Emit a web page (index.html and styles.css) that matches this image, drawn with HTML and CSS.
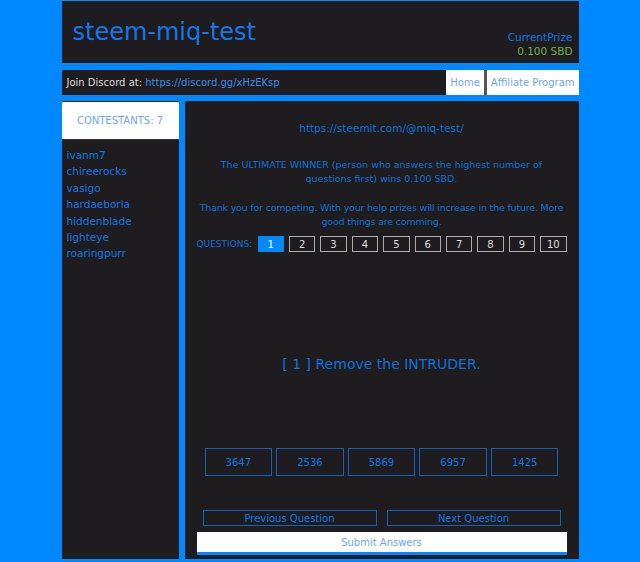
FILE: index.html
```html
<!DOCTYPE html>
<html lang="en">
<head>
    <meta charset="UTF-8">
    <meta name="viewport" content="width=device-width, initial-scale=1.0">
    <title>steem-miq-test</title>
    <link rel="stylesheet" href="styles.css">
</head>
<body>
    <div class="page">
        <header class="top-header">
            <h1 class="site-title">steem-miq-test</h1>
            <div class="prize">
                <div class="prize-label">CurrentPrize</div>
                <div class="prize-value">0.100 SBD</div>
            </div>
        </header>

        <nav class="nav-bar">
            <div class="discord">Join Discord at: <a href="#">https://discord.gg/xHzEKsp</a></div>
            <a class="nav-button" href="#">Home</a>
            <a class="nav-button affiliate" href="#">Affiliate Program</a>
        </nav>

        <div class="content">
            <aside class="sidebar">
                <div class="sidebar-header">CONTESTANTS: 7</div>
                <ul class="contestants">
                    <li>ivanm7</li>
                    <li>chireerocks</li>
                    <li>vasigo</li>
                    <li>hardaeborla</li>
                    <li>hiddenblade</li>
                    <li>lighteye</li>
                    <li>roaringpurr</li>
                </ul>
            </aside>

            <main class="quiz">
                <p class="quiz-link">https://steemit.com/@miq-test/</p>
                <p class="quiz-info">The ULTIMATE WINNER (person who answers the highest number of questions first) wins 0.100 SBD.</p>
                <p class="quiz-info thanks">Thank you for competing. With your help prizes will increase in the future. More good things are comming.</p>

                <div class="question-nav">
                    <span class="question-nav-label">QUESTIONS:</span>
                    <button class="q-button active">1</button>
                    <button class="q-button">2</button>
                    <button class="q-button">3</button>
                    <button class="q-button">4</button>
                    <button class="q-button">5</button>
                    <button class="q-button">6</button>
                    <button class="q-button">7</button>
                    <button class="q-button">8</button>
                    <button class="q-button">9</button>
                    <button class="q-button">10</button>
                </div>

                <div class="question-text">[ 1 ] Remove the INTRUDER.</div>

                <div class="answers">
                    <button class="answer">3647</button>
                    <button class="answer">2536</button>
                    <button class="answer">5869</button>
                    <button class="answer">6957</button>
                    <button class="answer">1425</button>
                </div>

                <div class="pager">
                    <button class="pager-button">Previous Question</button>
                    <button class="pager-button">Next Question</button>
                </div>

                <button class="submit-button">Submit Answers</button>
            </main>
        </div>
    </div>
</body>
</html>
```

FILE: styles.css
```css
body {
    margin: 0;
    background-color: #0088ff;
    font-family: 'DejaVu Sans', sans-serif;
    color: #1370d8;
}

.page {
    width: 517px;
    margin: 0 auto;
}

.top-header {
    display: flex;
    justify-content: space-between;
    align-items: center;
    height: 62px;
    margin-top: 1px;
    padding: 0 6px 0 11px;
    background-color: #1e1c1e;
}

.site-title {
    margin: 0;
    font-size: 24px;
    font-weight: normal;
    color: #1577e6;
}

.prize {
    align-self: flex-end;
    padding-bottom: 5px;
    text-align: right;
    font-size: 10.5px;
    line-height: 14px;
}

.prize-label {
    color: #1577e6;
}

.prize-value {
    color: #6db34e;
}

.nav-bar {
    display: flex;
    height: 25px;
    margin-top: 7px;
    background-color: #1e1c1e;
}

.discord {
    flex: 1;
    padding-left: 5px;
    font-size: 10px;
    line-height: 25px;
    color: #dcdcdc;
}

.discord a {
    color: #3a8ee6;
    text-decoration: none;
}

.nav-button {
    padding: 0 4px;
    background-color: #fff;
    font-size: 10px;
    line-height: 25px;
    color: #6ea6f2;
    text-decoration: none;
}

.nav-button.affiliate {
    border-left: 3px solid #555;
}

.content {
    display: flex;
    gap: 6px;
    margin-top: 6px;
    height: 458px;
}

.sidebar {
    width: 117px;
    background-color: #1e1c1e;
}

.sidebar-header {
    height: 37px;
    margin-top: 1px;
    background-color: #fff;
    border-bottom: 1px solid #333;
    font-size: 10px;
    line-height: 37px;
    text-align: center;
    color: #6ea6f2;
}

.contestants {
    list-style: none;
    margin: 0;
    padding: 7px 5px;
    font-size: 10.5px;
    line-height: 16.4px;
    color: #1577e6;
}

.quiz {
    display: flex;
    flex-direction: column;
    width: 394px;
    padding: 0 12px;
    box-sizing: border-box;
    background-color: #1e1c1e;
    text-align: center;
}

.quiz-link {
    margin: 20px 0 0;
    font-size: 10.5px;
    line-height: 14px;
}

.quiz-info {
    margin: 23px 0 0;
    font-size: 9.5px;
    line-height: 14px;
}

.quiz-info.thanks {
    margin-top: 15px;
    letter-spacing: -0.2px;
}

.question-nav {
    display: flex;
    align-items: center;
    gap: 5px;
    margin-top: 7px;
    height: 16px;
}

.question-nav-label {
    width: 56px;
    font-size: 9px;
    white-space: nowrap;
    text-align: left;
}

.q-button {
    flex: 1;
    height: 16px;
    padding: 0;
    border: 1px solid #aaa;
    background: transparent;
    font-family: inherit;
    font-size: 10px;
    color: #ddd;
}

.q-button.active {
    background-color: #0088ff;
    border-color: #0088ff;
    color: #fff;
}

.question-text {
    margin-top: 102px;
    font-size: 14px;
    line-height: 20px;
}

.answers {
    display: flex;
    gap: 4px;
    margin-top: 74px;
    padding: 0 8px;
}

.answer {
    flex: 1;
    height: 28px;
    border: 1px solid #1463b8;
    background: transparent;
    font-family: inherit;
    font-size: 10px;
    color: #1577e6;
}

.pager {
    display: flex;
    justify-content: space-between;
    margin-top: 34px;
    padding: 0 6px;
}

.pager-button {
    width: 174px;
    height: 16px;
    padding: 0;
    border: 1px solid #1463b8;
    background: transparent;
    font-family: inherit;
    font-size: 10px;
    color: #1577e6;
}

.submit-button {
    height: 23px;
    margin-top: 6px;
    border: none;
    border-bottom: 3px solid #0088ff;
    background-color: #fff;
    font-family: inherit;
    font-size: 10px;
    color: #6ea6f2;
}
```
